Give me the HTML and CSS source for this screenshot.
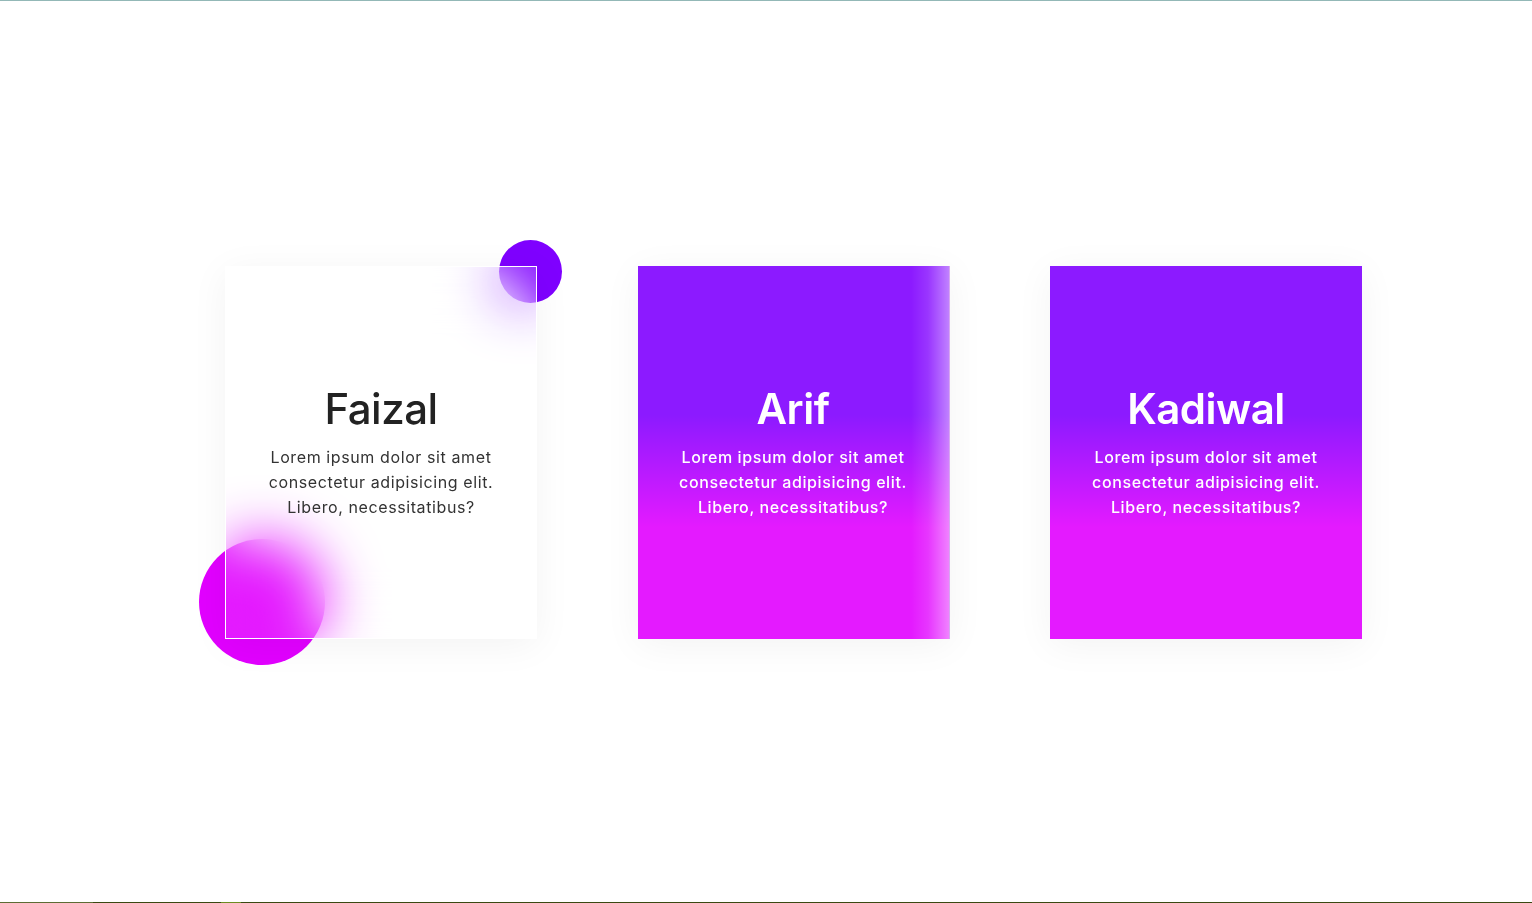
FILE: index.html
```html
<!DOCTYPE html>
<html lang="en">
<head>
<meta charset="utf-8">
<title>Glass cards</title>
<link rel="stylesheet" href="styles.css">
</head>
<body>
<div class="page">
  <div class="top-line"></div>
  <main class="stage">
    <div class="row">
      <div class="card-wrap">
        <span class="blob blob-top"></span>
        <span class="blob blob-bottom"></span>
        <div class="card card-glass">
          <h2 class="title">Faizal</h2>
          <p class="text">Lorem ipsum dolor sit amet consectetur adipisicing elit. Libero, necessitatibus?</p>
        </div>
      </div>
      <div class="card-wrap">
        <div class="card card-filled card-shift">
          <h2 class="title">Arif</h2>
          <p class="text">Lorem ipsum dolor sit amet consectetur adipisicing elit. Libero, necessitatibus?</p>
        </div>
      </div>
      <div class="card-wrap">
        <div class="card card-filled">
          <h2 class="title">Kadiwal</h2>
          <p class="text">Lorem ipsum dolor sit amet consectetur adipisicing elit. Libero, necessitatibus?</p>
        </div>
      </div>
    </div>
  </main>
  <div class="bottom-line"></div>
</div>
</body>
</html>
```

FILE: styles.css
```css
* { box-sizing: border-box; }
html, body { margin: 0; padding: 0; background: #fff; }
body { font-family: "Inter", "Noto Sans", sans-serif; }

.page {
  height: 903px;
  display: flex;
  flex-direction: column;
  overflow: hidden;
}
.top-line { height: 1px; background: #93b8b7; }
.bottom-line {
  height: 1px;
  background: linear-gradient(to right,
    #5c6c34 0, #5c6c34 93px,
    #3a4912 93px, #3a4912 221px,
    #6c8c22 221px, #6c8c22 241px,
    #3a4912 241px);
}

.stage {
  flex: 1;
  display: flex;
  align-items: center;
  justify-content: center;
  padding-left: 55px;
  padding-top: 1px;
}
.row {
  display: flex;
  gap: 100.5px;
}

.card-wrap {
  position: relative;
  width: 312px;
  height: 373px;
}

.blob {
  position: absolute;
  border-radius: 50%;
  z-index: 0;
}
.blob-top {
  left: 274px;
  top: -26px;
  width: 63px;
  height: 63px;
  background: #7f00ff;
}
.blob-bottom {
  left: -26px;
  top: 273px;
  width: 126px;
  height: 126px;
  background: #e100ff;
}

.card {
  position: relative;
  z-index: 1;
  width: 100%;
  height: 100%;
  display: flex;
  flex-direction: column;
  align-items: center;
  justify-content: center;
  text-align: center;
  padding: 0 30px 4px;
  box-shadow: 0 6px 36px rgba(0, 0, 0, 0.05);
}

.card-glass {
  background: rgba(255, 255, 255, 0.1);
  border: 1px solid #fff;
  backdrop-filter: blur(28px);
  -webkit-backdrop-filter: blur(28px);
  color: #222;
}

.card-filled {
  background: linear-gradient(to bottom, #8c1aff 0%, #8c1aff 40%, #e41aff 70%, #e41aff 100%);
  color: #fff;
}
.card-shift {
  border-right: 1px solid #d7a6f0;
}
.card-shift::after {
  content: "";
  position: absolute;
  top: 0;
  right: 0;
  bottom: 0;
  width: 38px;
  background: linear-gradient(to right, rgba(255,255,255,0) 0%, rgba(255,255,255,0.12) 45%, rgba(255,255,255,0.45) 100%);
  pointer-events: none;
}

.title {
  margin: 0;
  font-size: 42px;
  line-height: 56px;
  font-weight: 500;
  letter-spacing: -0.5px;
}
.card-filled .title { font-weight: 600; }

.text {
  margin: 8px 0 0;
  font-size: 16px;
  line-height: 25px;
  font-weight: 400;
  letter-spacing: 0.6px;
  color: #333;
}
.card-filled .text { font-weight: 500; color: #fff; }
```
